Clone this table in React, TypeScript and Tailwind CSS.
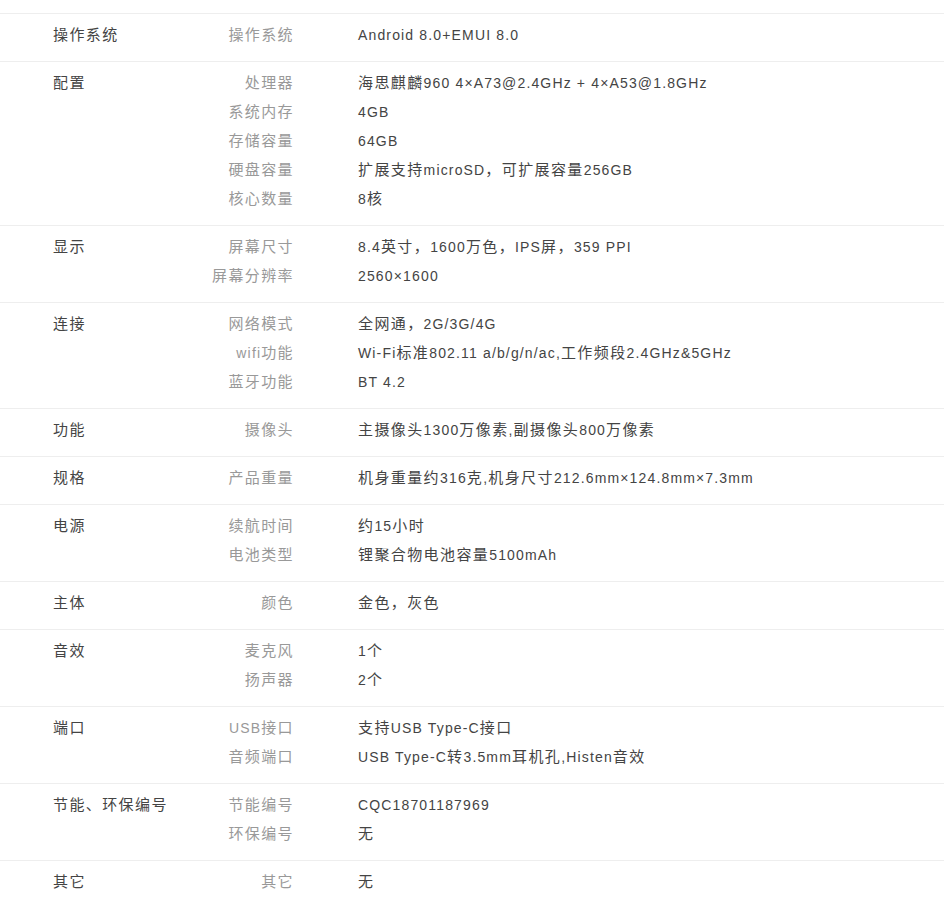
import React from "react";

type Group = { cat: string; items: [string, string][] };

const data: Group[] = [
  { cat: "操作系统", items: [["操作系统", "Android 8.0+EMUI 8.0"]] },
  {
    cat: "配置",
    items: [
      ["处理器", "海思麒麟960 4×A73@2.4GHz + 4×A53@1.8GHz"],
      ["系统内存", "4GB"],
      ["存储容量", "64GB"],
      ["硬盘容量", "扩展支持microSD，可扩展容量256GB"],
      ["核心数量", "8核"],
    ],
  },
  {
    cat: "显示",
    items: [
      ["屏幕尺寸", "8.4英寸，1600万色，IPS屏，359 PPI"],
      ["屏幕分辨率", "2560×1600"],
    ],
  },
  {
    cat: "连接",
    items: [
      ["网络模式", "全网通，2G/3G/4G"],
      ["wifi功能", "Wi-Fi标准802.11 a/b/g/n/ac,工作频段2.4GHz&5GHz"],
      ["蓝牙功能", "BT 4.2"],
    ],
  },
  { cat: "功能", items: [["摄像头", "主摄像头1300万像素,副摄像头800万像素"]] },
  { cat: "规格", items: [["产品重量", "机身重量约316克,机身尺寸212.6mm×124.8mm×7.3mm"]] },
  {
    cat: "电源",
    items: [
      ["续航时间", "约15小时"],
      ["电池类型", "锂聚合物电池容量5100mAh"],
    ],
  },
  { cat: "主体", items: [["颜色", "金色，灰色"]] },
  {
    cat: "音效",
    items: [
      ["麦克风", "1个"],
      ["扬声器", "2个"],
    ],
  },
  {
    cat: "端口",
    items: [
      ["USB接口", "支持USB Type-C接口"],
      ["音频端口", "USB Type-C转3.5mm耳机孔,Histen音效"],
    ],
  },
  {
    cat: "节能、环保编号",
    items: [
      ["节能编号", "CQC18701187969"],
      ["环保编号", "无"],
    ],
  },
  { cat: "其它", items: [["其它", "无"]] },
];

function T({ text }: { text: string }) {
  const parts = text.split(/([\u3000-\u9fff\uff00-\uffef]+)/).filter((p) => p.length > 0);
  return (
    <>
      {parts.map((p, i) =>
        /[\u3000-\u9fff\uff00-\uffef]/.test(p) ? (
          <span key={i} className="text-[15px] leading-none tracking-[1.4px]">
            {p}
          </span>
        ) : (
          <span key={i}>{p}</span>
        )
      )}
    </>
  );
}

export default function App() {
  return (
    <div
      className="w-[944px] min-h-[912px] bg-white pt-[13px] text-[14px] leading-[29px] tracking-[1.15px]"
      style={{ fontFamily: '"Liberation Sans", Arial, "Noto Sans CJK SC", sans-serif' }}
    >
      {data.map((g) => (
        <div key={g.cat} className="flex border-t border-[#eeeeee] pt-[7px] pb-[11px] pl-[53px]">
          <div className="w-[140px] h-[29px] shrink-0 whitespace-nowrap text-[#444444]">
            <T text={g.cat} />
          </div>
          <div className="flex flex-col">
            {g.items.map(([k, v]) => (
              <div key={k} className="flex h-[29px]">
                <div className="w-[101px] shrink-0 whitespace-nowrap text-right text-[#999999]">
                  <T text={k} />
                </div>
                <div className="ml-[64px] whitespace-nowrap text-[#444444]">
                  <T text={v} />
                </div>
              </div>
            ))}
          </div>
        </div>
      ))}
    </div>
  );
}
